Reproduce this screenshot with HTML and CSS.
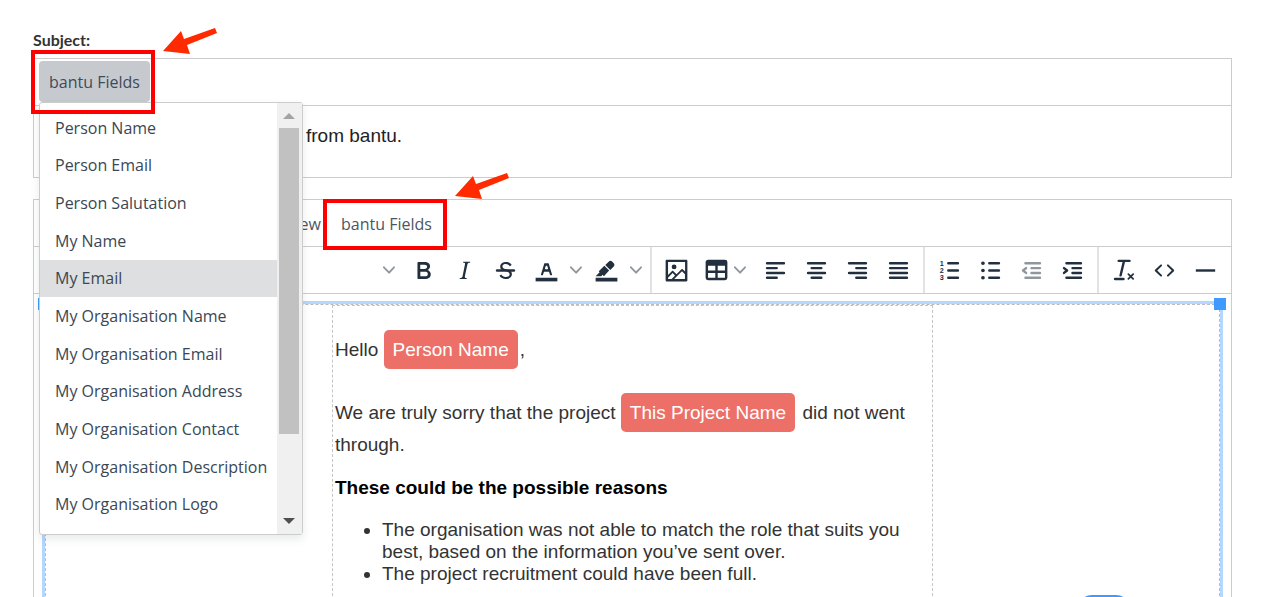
FILE: index.html
```html
<!DOCTYPE html>
<html lang="en">
<head>
<meta charset="utf-8">
<title>Email template</title>
<link rel="stylesheet" href="styles.css">
</head>
<body>
<svg class="sprite" aria-hidden="true">
  <symbol id="chevron" viewBox="0 0 10 10"><path d="M8.7 2.2c.3-.3.8-.3 1 0 .4.4.4.9 0 1.2L5.7 7.8c-.3.3-.9.3-1.2 0L.2 3.4a.8.8 0 0 1 0-1.2c.3-.3.8-.3 1.1 0L5 6l3.7-3.8Z"/></symbol>
  <symbol id="arrow" viewBox="0 0 60 30"><path d="M2 24 20 4l3 8L54 1l2 5-30 12 3 9Z"/></symbol>
</svg>
<main class="page">
  <h1 class="label">Subject:</h1>
  <section class="editor">
    <div class="menubar">
      <div class="menu-anchor">
        <button class="menu-button active" type="button">bantu Fields</button>
        <div class="highlight highlight-subject"></div>
        <svg class="arrow arrow-subject"><use href="#arrow"/></svg>
        <div class="dropdown">
          <div class="options">
            <button type="button">Person Name</button>
            <button type="button">Person Email</button>
            <button type="button">Person Salutation</button>
            <button type="button">My Name</button>
            <button type="button" class="hover">My Email</button>
            <button type="button">My Organisation Name</button>
            <button type="button">My Organisation Email</button>
            <button type="button">My Organisation Address</button>
            <button type="button">My Organisation Contact</button>
            <button type="button">My Organisation Description</button>
            <button type="button">My Organisation Logo</button>
          </div>
          <div class="scrollbar"><i class="up"></i><i class="thumb"></i><i class="down"></i></div>
        </div>
      </div>
    </div>
    <div class="subject-text">from bantu.</div>
  </section>

  <section class="editor body-editor">
    <div class="menubar body-menu">
      <button class="menu-button view" type="button">View</button>
      <div class="menu-anchor">
        <button class="menu-button" type="button">bantu Fields</button>
        <div class="highlight highlight-body"></div>
        <svg class="arrow arrow-body"><use href="#arrow"/></svg>
      </div>
    </div>
    <div class="toolbar">
      <div class="group group-format">
        <button class="tool block" type="button" aria-label="Blocks"><svg class="chev"><use href="#chevron"/></svg></button>
        <button class="tool" type="button" aria-label="Bold"><svg class="icon" viewBox="0 0 24 24"><path fill-rule="evenodd" d="M7.8 19c-.3 0-.5 0-.6-.2l-.2-.5V5.7c0-.2 0-.4.2-.5l.6-.2h5c1.5 0 2.7.3 3.5 1 .7.6 1.1 1.4 1.1 2.5a3 3 0 0 1-.6 1.9c-.4.6-1 1-1.6 1.2.4.1.9.3 1.3.6s.8.7 1 1.2c.4.4.5 1 .5 1.6 0 1.3-.4 2.3-1.3 3-.8.7-2.1 1-3.8 1H7.8Zm5-8.3c.6 0 1.2-.1 1.6-.5.4-.3.6-.7.6-1.3 0-1.1-.8-1.7-2.3-1.7H9.3v3.5h3.4Zm.5 6c.7 0 1.3-.1 1.7-.4.4-.4.6-.9.6-1.5s-.2-1-.7-1.4c-.4-.3-1-.4-2-.4H9.4v3.8h4Z"/></svg></button>
        <button class="tool" type="button" aria-label="Italic"><svg class="icon" viewBox="0 0 24 24"><path d="m16.7 4.700-.1.9h-.3c-.6 0-1 0-1.400.3-.3.3-.4.6-.5 1.100l-2.100 9.800v.6c0 .5.4.8 1.400.8h.2l-.2.8H8l.2-.8h.2c1.100 0 1.800-.5 2-1.500l2-9.800.1-.5c0-.6-.4-.8-1.400-.8h-.3l.2-.9h5.800Z"/></svg></button>
        <button class="tool" type="button" aria-label="Strikethrough"><svg class="icon" viewBox="0 0 24 24"><path d="M15.600 8.500c-.5-.7-1-1.100-1.300-1.300-.6-.4-1.300-.6-2-.6-2.700 0-2.800 1.700-2.800 2.100 0 1.600 1.800 2 3.200 2.300 4.400.9 4.600 2.800 4.600 3.900 0 1.400-.7 4.100-5 4.100A6.200 6.200 0 0 1 7 16.400l1.500-1.100c.4.6 1.600 2 3.700 2 1.600 0 2.500-.4 3-1.200.4-.8.3-2-.8-2.600-.7-.4-1.600-.7-2.900-1-1-.2-3.900-.8-3.900-3.600C7.600 6 10.300 5 12.400 5c2.900 0 4.200 1.600 4.700 2.400l-1.500 1.100Z"/><path d="M5 11h14a1 1 0 0 1 0 2H5a1 1 0 0 1 0-2Z"/></svg></button>
        <button class="tool split" type="button" aria-label="Text colour"><svg class="icon" viewBox="0 0 24 24"><path d="M3 18h18v3H3z"/><path fill-rule="evenodd" d="M8.700 16h-.8a.5.5 0 0 1-.5-.6l2.700-9c.1-.3.3-.4.5-.4h2.800c.2 0 .4.1.5.4l2.700 9a.5.5 0 0 1-.5.6h-.8a.5.5 0 0 1-.4-.4l-.7-2.200c0-.3-.3-.4-.5-.4h-3.400c-.2 0-.4.1-.5.4l-.7 2.200c0 .3-.2.4-.4.4Zm2.600-7.600-.6 2a.5.5 0 0 0 .5.6h1.600a.5.5 0 0 0 .5-.6l-.6-2c0-.3-.3-.4-.5-.4h-.4c-.2 0-.4.1-.5.4Z"/></svg><svg class="chev"><use href="#chevron"/></svg></button>
        <button class="tool split" type="button" aria-label="Background colour"><svg class="icon" viewBox="0 0 24 24"><path d="M3 18h18v3H3zM7.700 16.700H3l3.300-3.300-.7-.8L10.200 8l4 4.100-4 4.200c-.2.2-.6.2-.8 0l-.6-.7-1.100 1.100ZM11 7.400l3-2.900a2 2 0 0 1 2.600 0L18 6c.7.7.7 2 0 2.700l-2.900 2.900Z"/></svg><svg class="chev"><use href="#chevron"/></svg></button>
      </div>
      <div class="group group-insert">
        <button class="tool" type="button" aria-label="Image"><svg class="icon" viewBox="0 0 24 24"><path fill-rule="evenodd" d="m5 15.700 3.300-3.200c.3-.3.7-.3 1 0L12 15l4.100-4c.3-.4.8-.4 1 0l2 1.900V5H5v10.700ZM5 18V19h3l2.800-2.900-2-2L5 17.900Zm14-3-2.500-2.400-6.400 6.500H19v-4ZM4 3h16c.6 0 1 .4 1 1v16c0 .6-.4 1-1 1H4a1 1 0 0 1-1-1V4c0-.6.4-1 1-1Zm6 8a2 2 0 1 0 0-4 2 2 0 0 0 0 4Z"/></svg></button>
        <button class="tool split" type="button" aria-label="Table"><svg class="icon" viewBox="0 0 24 24"><path fill-rule="evenodd" d="M19 3a2 2 0 0 1 2 2v13a2 2 0 0 1-2 2H5a2 2 0 0 1-2-2V5c0-1.100.9-2 2-2h14ZM5 14v4h6v-4H5Zm14 0h-6v4h6v-4Zm0-6h-6v4h6V8ZM5 12h6V8H5v4Z"/></svg><svg class="chev"><use href="#chevron"/></svg></button>
        <button class="tool" type="button" aria-label="Align left"><svg class="icon line" viewBox="0 0 24 24"><path d="M5 6h14M5 10h8M5 14h14M5 18h8"/></svg></button>
        <button class="tool" type="button" aria-label="Align centre"><svg class="icon line" viewBox="0 0 24 24"><path d="M5 6h14M8 10h8M5 14h14M8 18h8"/></svg></button>
        <button class="tool" type="button" aria-label="Align right"><svg class="icon line" viewBox="0 0 24 24"><path d="M5 6h14M11 10h8M5 14h14M11 18h8"/></svg></button>
        <button class="tool" type="button" aria-label="Justify"><svg class="icon line" viewBox="0 0 24 24"><path d="M5 6h14M5 10h14M5 14h14M5 18h14"/></svg></button>
      </div>
      <div class="group">
        <button class="tool" type="button" aria-label="Numbered list"><svg class="icon line" viewBox="0 0 24 24"><path d="M11 6h8M11 12h8M11 18h8"/><g class="digits"><text x="4" y="8">1</text><text x="4" y="14">2</text><text x="4" y="20">3</text></g></svg></button>
        <button class="tool" type="button" aria-label="Bullet list"><svg class="icon line" viewBox="0 0 24 24"><path d="M11 6h8M11 12h8M11 18h8"/><path d="M5.700 6h.1M5.700 12h.1M5.700 18h.1" stroke-width="3"/></svg></button>
        <button class="tool" type="button" aria-label="Outdent" disabled><svg class="icon line" viewBox="0 0 24 24"><path d="M7 6h12M12 10h7M12 14h7M7 18h12M7.500 10 5 12l2.500 2"/></svg></button>
        <button class="tool" type="button" aria-label="Indent"><svg class="icon line" viewBox="0 0 24 24"><path d="M7 6h12M12 10h7M12 14h7M7 18h12M5 10l2.500 2L5 14"/></svg></button>
      </div>
      <div class="group">
        <button class="tool" type="button" aria-label="Clear formatting"><svg class="icon" viewBox="0 0 24 24"><path d="M13.200 5a1 1 0 0 1 0 .2l-2.600 11a1 1 0 0 1-1 .8h-.2a.8.8 0 0 1-.8-1l2.600-11H8a1 1 0 1 1 0-2h9a1 1 0 0 1 0 2h-3.800ZM5 18h7a1 1 0 0 1 0 2H5a1 1 0 0 1 0-2Zm14.500 1.500L18 18l-1.500 1.500a.7.7 0 0 1-1-1L17 17l-1.500-1.500a.7.7 0 0 1 1-1L18 16l1.500-1.500a.7.7 0 0 1 1 1L19 17l1.500 1.500a.7.7 0 0 1-1 1Z"/></svg></button>
        <button class="tool" type="button" aria-label="Source code"><svg class="icon" viewBox="0 0 24 24"><path d="M9.800 15.700c.3.3.3.8 0 1-.3.4-.9.4-1.200 0l-4.400-4.100a.8.8 0 0 1 0-1.200l4.400-4.200c.3-.3.9-.3 1.200 0 .3.3.3.8 0 1.100L6 12l3.800 3.700ZM14.200 15.700c-.3.3-.3.8 0 1 .4.4.9.4 1.200 0l4.400-4.100c.3-.3.3-.8 0-1.200l-4.400-4.200a.8.8 0 0 0-1.200 0c-.3.3-.3.8 0 1.100L18 12l-3.800 3.700Z"/></svg></button>
        <button class="tool" type="button" aria-label="Horizontal line"><svg class="icon" viewBox="0 0 24 24"><path d="M4 11h16v2H4z"/></svg></button>
      </div>
    </div>
    <div class="canvas">
      <div class="selection">
        <i class="handle handle-left"></i><i class="handle handle-right"></i>
        <article class="mail">
          <p>Hello <span class="token">Person Name</span>,</p>
          <p>We are truly sorry that the project <span class="token">This Project Name</span> did not went through.</p>
          <h2>These could be the possible reasons</h2>
          <ul>
            <li>The organisation was not able to match the role that suits you best, based on the information you’ve sent over.</li>
            <li>The project recruitment could have been full.</li>
          </ul>
        </article>
      </div>
    </div>
  </section>
</main>
<div class="chat-edge"></div>
</body>
</html>
```
FILE: styles.css
```css
* { box-sizing: border-box; }
body {
  margin: 0;
  height: 100vh;
  overflow: hidden;
  position: relative;
  background: #fff;
  color: #222f3e;
  font: 16px/24px "Open Sans", "Noto Sans", sans-serif;
}
button { border: 0; background: none; padding: 0; font: inherit; color: inherit; }
.sprite { position: absolute; width: 0; height: 0; }
.page { height: 100%; padding: 28px 36px 0 33px; display: flex; flex-direction: column; }
.label { margin: 0 0 6px; font: bold 16px/24px Lato, sans-serif; color: #333; }
.editor { border: 1px solid #ccc; }
.menubar {
  display: flex;
  height: 47px;
  padding: 2px 5px 3px;
  border-bottom: 1px solid #ccc;
}
.menu-anchor { position: relative; display: flex; }
.menu-button { padding: 0 10px; border-radius: 4px; color: #4b5663; }
.menu-button.active { background: #c6cacf; color: #3f4b58; }
.subject-text {
  padding: 18px 0 29px 272px;
  font: 19px/24px "Liberation Sans", Arial, sans-serif;
  color: #222;
}
.highlight { position: absolute; border: 4px solid #f00; z-index: 3; pointer-events: none; }
.highlight-subject { inset: -11px -5px -12px -8px; }
.highlight-body { inset: -4px -5px -6px -8px; }
.arrow { position: absolute; width: 60px; height: 30px; fill: #ff2a00; z-index: 3; }
.arrow-subject { left: 122px; top: -34px; }
.arrow-body { left: 122px; top: -31px; }

.dropdown {
  position: absolute;
  z-index: 2;
  top: 100%;
  left: 0;
  width: 264px;
  height: 433px;
  display: flex;
  background: #fff;
  border: 1px solid #ccc;
  border-radius: 3px;
  box-shadow: 0 4px 8px rgba(34, 47, 62, .1);
}
.options { flex: 1; display: grid; grid-template-rows: repeat(11, 1fr); padding: 6px 0 11px; }
.options button { padding: 0 0 0 15px; text-align: left; white-space: nowrap; color: #3b4754; }
.options .hover { background: #dedfe1; }
.scrollbar {
  width: 25px;
  padding: 10px 3px 10px 2px;
  display: flex;
  flex-direction: column;
  align-items: center;
  background: #f0f0f0;
}
.thumb { width: 100%; height: 306px; margin: 9px 0 auto; background: #c1c1c1; }
.up, .down { border: 6px solid transparent; border-top: 0; border-bottom-color: #a3a3a3; }
.down { border-top: 6px solid #505050; border-bottom: 0; }

.body-editor { flex: 1; min-height: 0; margin-top: 21px; border-bottom: 0; display: flex; flex-direction: column; }
.body-menu { flex: none; padding: 3px 5px 2px 242px; }
.toolbar { flex: none; display: flex; height: 47px; border-bottom: 1px solid #ccc; }
.group { display: flex; align-items: center; padding: 0 4px; border-right: 2px solid #e2e2e2; }
.group:last-child { border-right: 0; }
.group-format { width: 618px; justify-content: flex-end; }
.tool { width: 41px; height: 41px; display: flex; align-items: center; justify-content: center; fill: #222f3e; }
.tool:disabled { opacity: .5; }
.split { width: 60px; gap: 9px; justify-content: flex-start; padding-left: 6px; }
.group-insert .split { width: 58px; gap: 3px; padding-left: 5px; }
.block { justify-content: flex-end; padding-right: 8px; }
.icon { width: 29px; height: 29px; flex: none; }
.line { fill: none; stroke: #222f3e; stroke-width: 2; stroke-linecap: round; stroke-linejoin: round; }
.digits { fill: #222f3e; stroke: none; font: bold 6px "Liberation Sans", sans-serif; }
.chev { width: 12px; height: 12px; flex: none; fill: #8f969e; }

.canvas { flex: 1; min-height: 0; padding: 7px 8px 0; overflow: hidden; }
.selection {
  position: relative;
  height: calc(100% + 12px);
  padding-top: 1px;
  border: 3px solid #b4d7ff;
  outline: 1px dashed #bbb;
  outline-offset: -4px;
}
.handle { position: absolute; width: 12px; height: 12px; top: -6px; background: #4099ff; }
.handle-left { left: -7px; }
.handle-right { right: -6px; }
.mail {
  width: 601px;
  height: 100%;
  margin: 0 auto;
  padding: 28px 2px 0;
  border: 1px dashed #c4c4c4;
  font: 19px/22px "Liberation Sans", Arial, sans-serif;
  color: #333;
}
.mail p { margin: 0 0 31px; line-height: 32px; }
.mail p + p { margin-bottom: 16px; }
.token { margin-right: 2px; padding: 9px; border-radius: 5px; background: #ec7067; color: #fff; }
.mail h2 { margin: 0 0 20px; font-size: 19px; line-height: 22px; color: #000; }
.mail ul { margin: 0; padding-left: 47px; }
.chat-edge { position: absolute; right: 137px; bottom: -28px; width: 54px; height: 30px; border-radius: 16px; background: #4099ff; }
```
